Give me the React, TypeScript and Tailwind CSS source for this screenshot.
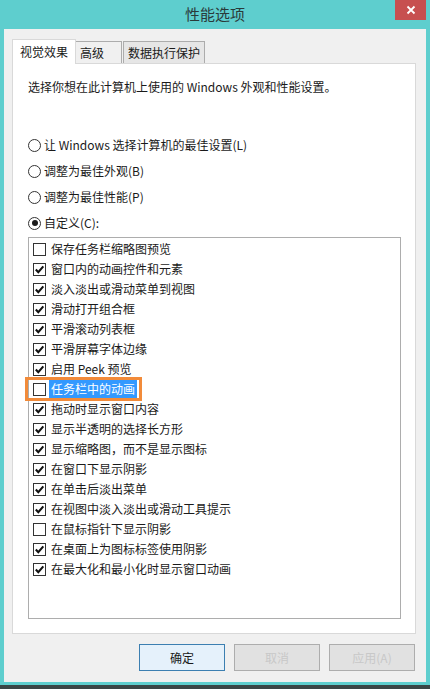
import React from 'react';

const font = { fontFamily: '"Noto Sans CJK SC", "Noto Sans", sans-serif' };

const items: { label: string; checked: boolean; focus?: boolean }[] = [
  { label: '保存任务栏缩略图预览', checked: false },
  { label: '窗口内的动画控件和元素', checked: true },
  { label: '淡入淡出或滑动菜单到视图', checked: true },
  { label: '滑动打开组合框', checked: true },
  { label: '平滑滚动列表框', checked: true },
  { label: '平滑屏幕字体边缘', checked: true },
  { label: '启用 Peek 预览', checked: true },
  { label: '任务栏中的动画', checked: false, focus: true },
  { label: '拖动时显示窗口内容', checked: true },
  { label: '显示半透明的选择长方形', checked: true },
  { label: '显示缩略图，而不是显示图标', checked: true },
  { label: '在窗口下显示阴影', checked: true },
  { label: '在单击后淡出菜单', checked: true },
  { label: '在视图中淡入淡出或滑动工具提示', checked: true },
  { label: '在鼠标指针下显示阴影', checked: false },
  { label: '在桌面上为图标标签使用阴影', checked: true },
  { label: '在最大化和最小化时显示窗口动画', checked: true },
];

const Radio = ({ label, checked }: { label: string; checked?: boolean }) => (
  <div className="flex items-center h-[20px] mt-[6px]">
    <span className="w-[13px] h-[13px] rounded-full border border-[#333] bg-white flex items-center justify-center">
      {checked && <span className="w-[6px] h-[6px] rounded-full bg-[#1a1a1a]" />}
    </span>
    <span className="ml-[3px] text-[12px] text-[#1a1a1a]">{label}</span>
  </div>
);

const Box = ({ checked }: { checked: boolean }) => (
  <span className="w-[13px] h-[13px] border border-[#333] bg-white flex items-center justify-center shrink-0">
    {checked && (
      <svg width="11" height="11" viewBox="0 0 11 11">
        <path d="M1.8 5.6 L4.3 8.2 L9.3 2.4" fill="none" stroke="#111" strokeWidth="2.1" />
      </svg>
    )}
  </span>
);

export default function App() {
  return (
    <div className="w-[430px] h-[689px] bg-[#5ecece] flex flex-col overflow-hidden" style={font}>
      <div className="h-[29px] relative flex items-center justify-center shrink-0">
        <span className="text-[15px] text-[#2a3a3a]">性能选项</span>
        <div className="absolute right-[4px] top-0 w-[31px] h-[20px] bg-[#c75050] flex items-center justify-center">
          <svg width="10" height="10" viewBox="0 0 10 10">
            <path d="M1.5 1.5 L8.5 8.5 M8.5 1.5 L1.5 8.5" stroke="#fff" strokeWidth="1.8" />
          </svg>
        </div>
      </div>
      <div className="mx-[4px] mb-[3px] bg-[#f0f0f0] h-[653px] pl-[8px] pr-[10px] pt-[10px] flex flex-col">
        <div className="flex items-end h-[24px]">
          <div className="h-[25px] w-[64px] bg-white border border-b-0 border-[#d9d9d9] flex items-center justify-center text-[12px] text-[#1a1a1a] relative z-10 -mb-px">
            视觉效果
          </div>
          <div className="h-[22px] w-[46px] bg-[#f0f0f0] border border-b-0 border-l-0 border-[#acacac] flex items-center pl-[4px] text-[12px] text-[#1a1a1a]">
            高级
          </div>
          <div className="h-[22px] w-[82px] ml-px bg-[#e6e6e6] border border-b-0 border-[#acacac] flex items-center justify-center text-[12px] text-[#1a1a1a]">
            数据执行保护
          </div>
        </div>
        <div className="h-[571px] bg-white border border-[#d9d9d9] pl-[15px] pr-[14px]">
          <p className="mt-[15px] text-[12px] text-[#1a1a1a] leading-[16px]">
            选择你想在此计算机上使用的 Windows 外观和性能设置。
          </p>
          <div className="mt-[40px]">
            <Radio label="让 Windows 选择计算机的最佳设置(L)" />
            <Radio label="调整为最佳外观(B)" />
            <Radio label="调整为最佳性能(P)" />
            <Radio label="自定义(C):" checked />
          </div>
          <div className="mt-[4px] h-[382px] border border-[#adadad] bg-white pt-px pl-[4px]">
            {items.map((it) => (
              <div key={it.label} className="relative flex items-center h-[20px]">
                <Box checked={it.checked} />
                <span
                  className={
                    it.focus
                      ? 'ml-[3px] px-[2px] h-[18px] flex items-center bg-[#3399ff] text-white text-[12px]'
                      : 'ml-[5px] text-[12px] text-[#1a1a1a]'
                  }
                >
                  {it.label}
                </span>
                {it.focus && (
                  <span className="absolute left-[-8px] top-[-2px] w-[117px] h-[24px] border-[3px] border-[#f28b3a]" />
                )}
              </div>
            ))}
          </div>
        </div>
        <div className="flex justify-end gap-[9px] mt-[10px] pr-px">
          <button className="w-[86px] h-[27px] bg-[#e5f1fb] border border-[#3c7fb1] text-[12px] text-[#1a1a1a]">
            确定
          </button>
          <button className="w-[86px] h-[27px] bg-[#e1e1e1] border border-[#adadad] text-[12px] text-[#c8c8c8]">
            取消
          </button>
          <button className="w-[86px] h-[27px] bg-[#e1e1e1] border border-[#adadad] text-[12px] text-[#c8c8c8]">
            应用(A)
          </button>
        </div>
      </div>
      <div className="flex-1 bg-[#3a4545]" />
    </div>
  );
}
